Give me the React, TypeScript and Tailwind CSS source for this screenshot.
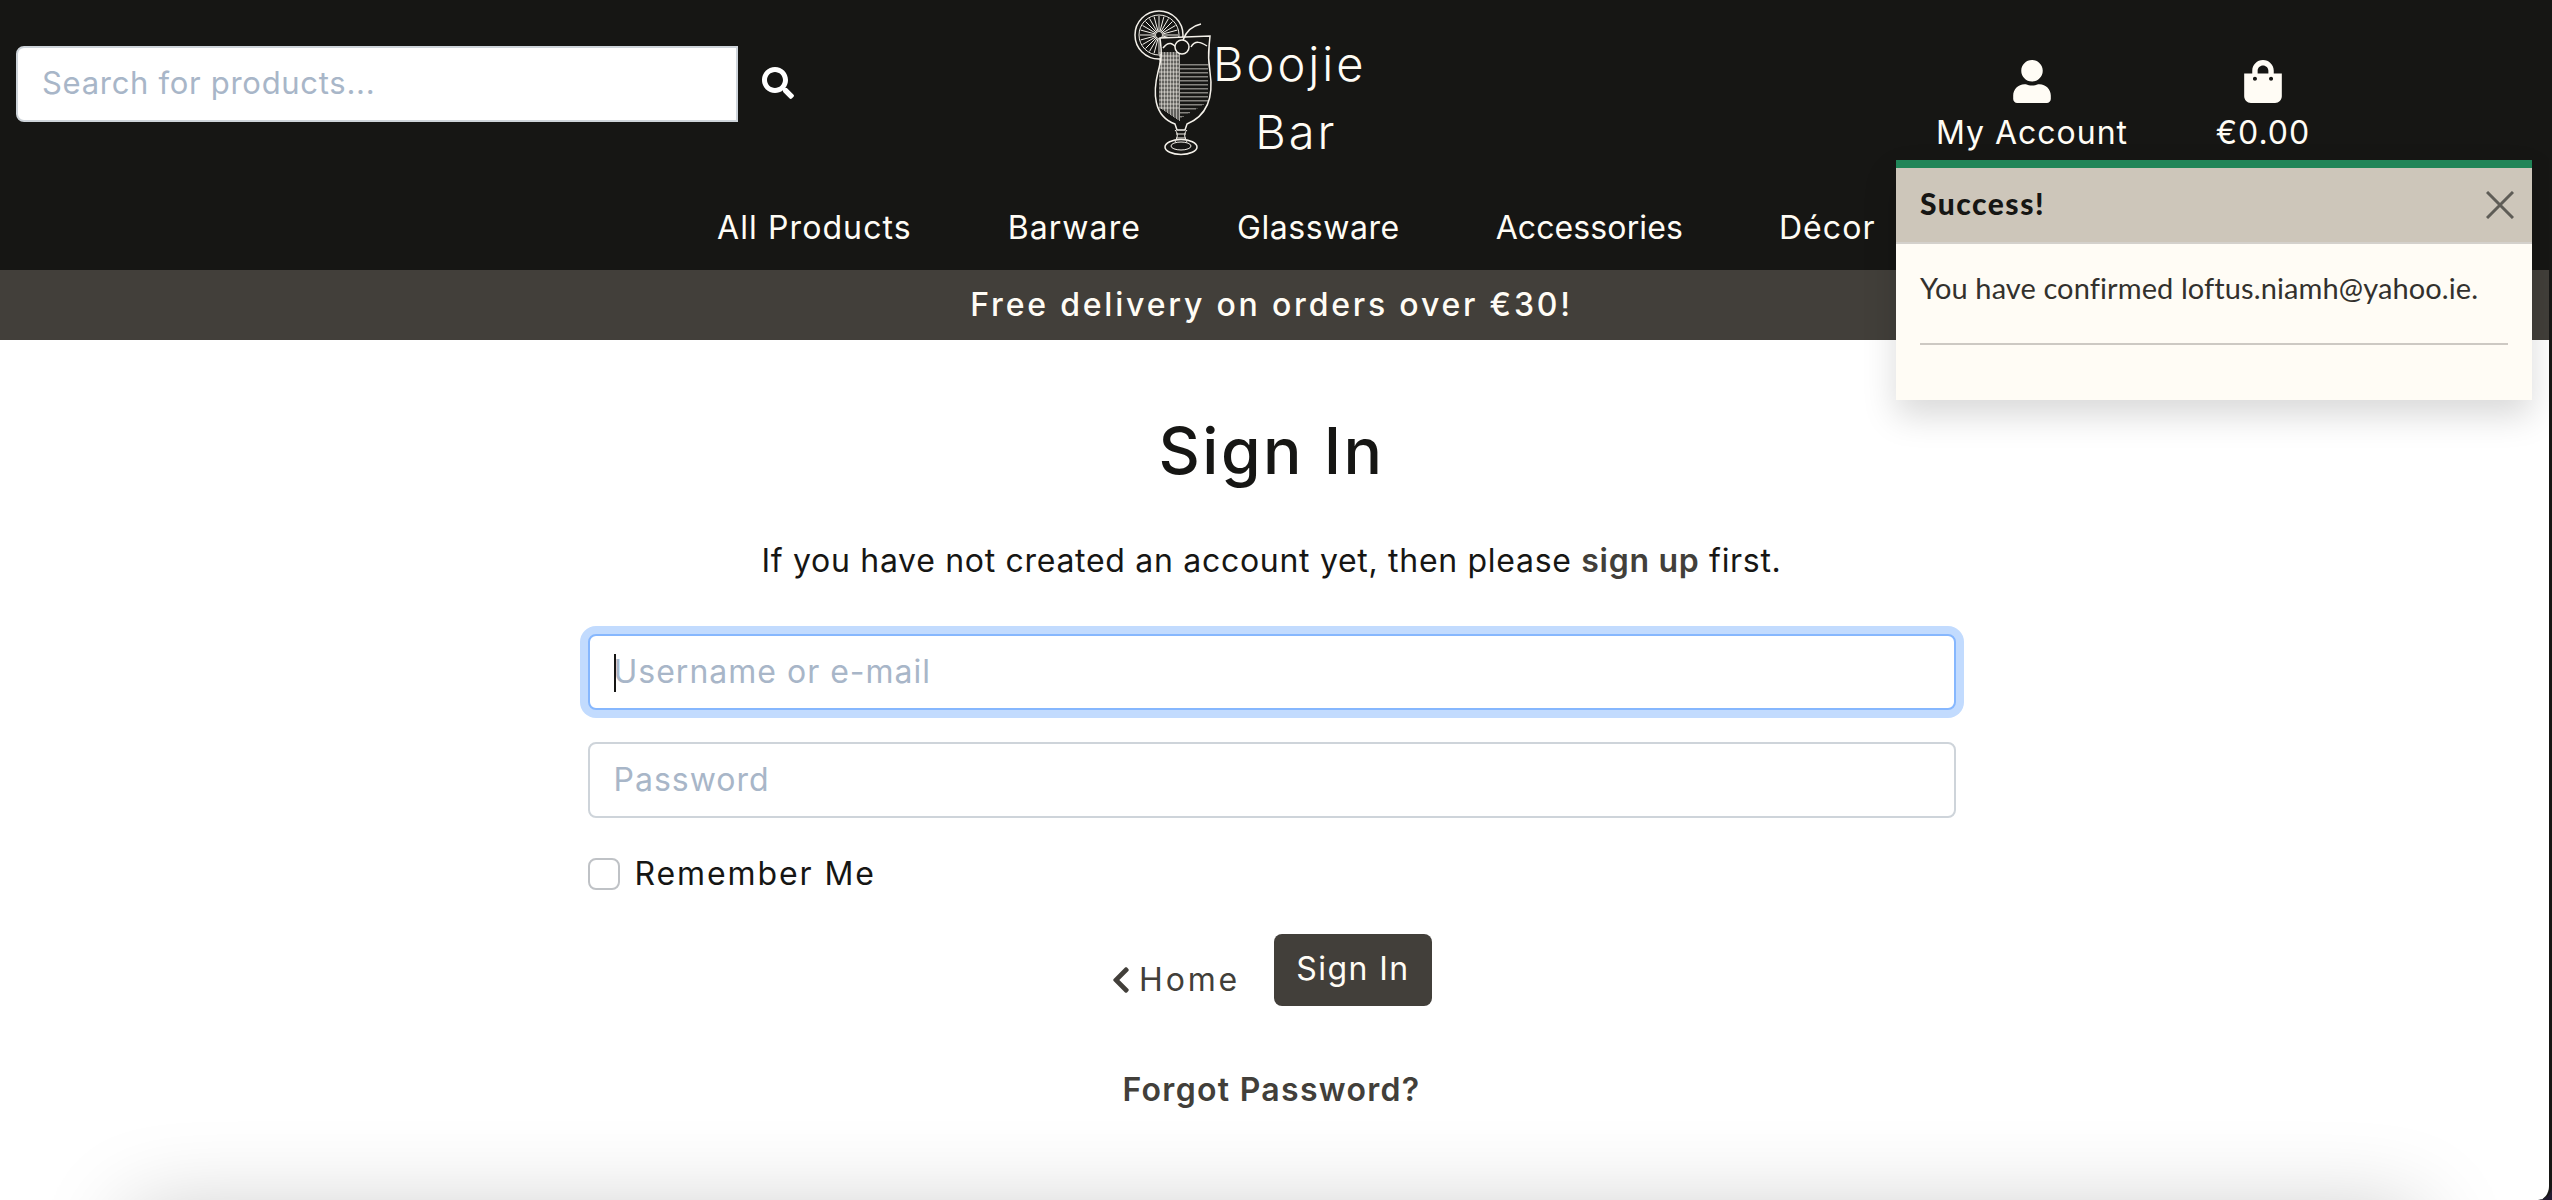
import { FaChevronLeft, FaSearch, FaShoppingBag, FaUser } from "react-icons/fa";

const navLinks = [
  { label: "All Products", spacing: "tracking-[1.1px]" },
  { label: "Barware", spacing: "tracking-[1.1px]" },
  { label: "Glassware", spacing: "tracking-[0.55px]" },
  { label: "Accessories", spacing: "tracking-[0.1px]" },
  { label: "Décor", spacing: "tracking-[1.1px]" },
];

function LogoGlass() {
  const spokes = Array.from({ length: 24 }, (_, i) => (i * Math.PI) / 12);
  const hatch = Array.from({ length: 14 }, (_, i) => i);

  return (
    <svg width="84" height="156" viewBox="0 0 84 156" fill="none" stroke="#f4f1ea" strokeWidth="1" className="shrink-0">
      {/* orange slice */}
      <circle cx="26" cy="35" r="24" strokeWidth="1.5" />
      <circle cx="26" cy="35" r="20" />
      {spokes.map((a) => (
        <line
          key={a}
          x1={26 + 3 * Math.cos(a)}
          y1={35 + 3 * Math.sin(a)}
          x2={26 + 19 * Math.cos(a)}
          y2={35 + 19 * Math.sin(a)}
        />
      ))}
      {/* glass */}
      <path
        d="M27 38 L77 36 C76 50 74 54 77 72 C80 92 78 114 54 124 L52 130 L44 130 L42 124 C20 116 20 92 25 72 C30 54 28 48 27 38 Z"
        fill="#161614"
        strokeWidth="1.5"
      />
      {hatch.map((i) => (
        <line key={`h${i}`} x1="26" y1={56 + i * 4} x2="46" y2={56 + i * 4} strokeWidth="0.7" />
      ))}
      {hatch.map((i) => (
        <line key={`v${i}`} x1={27 + i * 1.5} y1="52" x2={27 + i * 1.5} y2={108 + i} strokeWidth="0.7" />
      ))}
      {hatch.map((i) => (
        <line key={`d${i}`} x1={48 + i * 2} y1="64" x2={48 + i * 2} y2={118 - i * 1.2} strokeWidth="1" strokeDasharray="1.5 2.5" />
      ))}
      <path d="M30 48 C36 40 40 44 44 48 M58 47 C62 40 68 42 74 46" strokeWidth="1.5" />
      {/* cherry */}
      <circle cx="49" cy="47" r="7" fill="#161614" strokeWidth="1.5" />
      <path d="M50 40 C53 32 58 26 68 24" strokeWidth="1.5" />
      {/* stem and foot */}
      <path d="M42 130 C46 134 44 138 42 142 M54 130 C50 134 52 138 54 142 M43 134 H53 M43 138 H53" />
      <ellipse cx="48" cy="147" rx="16" ry="7.5" strokeWidth="1.5" />
      <ellipse cx="48" cy="146" rx="10" ry="4" />
    </svg>
  );
}

export default function App() {
  return (
    <div className="h-[1200px] bg-[#221b30] font-[Inter,sans-serif]">
      <div className="relative h-[1200px] overflow-hidden rounded-br-[14px] border-r-[3px] border-[#161614] bg-white text-[#161614]">
        <header className="h-[270px] bg-[#161614] text-[#fffcf5]">
          <div className="flex h-[188px] items-start">
            <form className="mt-[46px] ml-4 flex items-center">
              <input
                placeholder="Search for products..."
                className="h-[76px] w-[722px] rounded-l-lg border-2 border-[#ced4da] bg-white px-6 pb-[3px] text-[31px] tracking-[0.7px] text-[#161614] placeholder:text-[#a8b6c8]"
              />
              <FaSearch className="mb-[3px] ml-6 size-8 text-white" />
            </form>

            <div className="ml-[339px] flex">
              <LogoGlass />
              <div className="-ml-[4px] flex flex-col items-center text-[47px] font-light tracking-[3px] leading-[68px]">
                <span className="-mt-0 pt-[30px]">Boojie</span>
                <span className="ml-[13px]">Bar</span>
              </div>
            </div>

            <div className="mt-[60px] ml-[571px] flex items-start gap-[90px] text-[32px] tracking-[1px] leading-[60px]">
              <a className="flex w-[189px] flex-col items-center">
                <FaUser className="h-[43px] w-[38px]" />
                <span className="whitespace-nowrap">My Account</span>
              </a>
              <a className="flex w-[93px] flex-col items-center">
                <FaShoppingBag className="h-[43px] w-[38px]" />
                <span>€0.00</span>
              </a>
            </div>
          </div>

          <nav className="mt-[20px] flex gap-[96px] pl-[717px] text-[32px] leading-[40px]">
            {navLinks.map((link) => (
              <a key={link.label} className={`whitespace-nowrap ${link.spacing}`}>
                {link.label}
              </a>
            ))}
          </nav>
        </header>

        <div className="flex h-[70px] items-center justify-center bg-[#423f3a] pr-[6px] text-[32px] font-medium tracking-[2.8px] text-[#fffcf5]">
          Free delivery on orders over €30!
        </div>

        <main className="flex flex-col items-center pr-[6px]">
          <h1 className="mt-[70px] text-[64px] font-medium tracking-[2.5px] leading-[82px]">Sign In</h1>
          <p className="mt-[45px] text-[32px] tracking-[0.7px] leading-[48px]">
            If you have not created an account yet, then please{" "}
            <a className="font-semibold text-[#423f3a]">sign up</a> first.
          </p>

          <form className="mt-[49px] flex w-[1368px] flex-col">
            <div className="relative">
              <input
                placeholder="Username or e-mail"
                className="h-[76px] w-full rounded-lg border-2 border-[#86b7fe] bg-white px-6 pb-[2px] text-[32px] tracking-[1px] shadow-[0_0_0_8px_#c2dbfe] outline-none placeholder:text-[#a8b6c8]"
              />
              <span className="absolute top-[20px] left-[26px] h-[38px] w-[2px] bg-[#161614]" />
            </div>
            <input
              placeholder="Password"
              className="mt-8 h-[76px] w-full rounded-lg border-2 border-[#ced4da] bg-white px-6 pb-[2px] text-[32px] tracking-[1px] placeholder:text-[#a8b6c8]"
            />
            <label className="mt-[40px] flex items-center text-[32px] tracking-[1.9px] leading-[32px]">
              <input
                type="checkbox"
                className="size-8 appearance-none rounded-lg border-2 border-[#bfc2c6] bg-white"
              />
              <span className="ml-[15px]">Remember Me</span>
            </label>

            <div className="mt-[44px] flex items-center justify-center">
              <a className="mt-[20px] flex items-center text-[32px] tracking-[2.8px] text-[#423f3a]">
                <FaChevronLeft className="h-[30px] w-[20px]" />
                <span className="ml-[8px]">Home</span>
              </a>
              <button
                type="button"
                className="ml-[34px] h-[72px] w-[158px] rounded-lg bg-[#423f3a] pb-[3px] text-[32px] tracking-[1.4px] text-[#fffcf5]"
              >
                Sign In
              </button>
            </div>

            <a className="mt-[64px] text-center text-[32px] font-semibold tracking-[1.3px] leading-[40px] text-[#423f3a]">
              Forgot Password?
            </a>
          </form>
        </main>

        <footer className="mx-[160px] mt-[132px] h-[100px] bg-white shadow-[0_0_90px_30px_rgba(0,0,0,0.22)]" />

        {/* toast */}
        <div className="absolute top-[160px] left-[1896px] w-[636px] border-t-8 border-[#208558] bg-[#fffcf5] font-[Lato,sans-serif] shadow-[0_16px_32px_rgba(0,0,0,0.15)]">
          <div className="flex h-[76px] items-center justify-between border-b-2 border-[#d4d1cc] bg-[#cdc6ba] pr-[18px] pl-6">
            <strong className="pb-[3px] text-[30px] font-black tracking-[1.5px] text-[#161614]">Success!</strong>
            <svg width="28" height="28" viewBox="0 0 28 28" stroke="#5e5c56" strokeWidth="3" className="shrink-0">
              <path d="M1 1 27 27 M27 1 1 27" />
            </svg>
          </div>
          <div className="h-[156px] px-6 pt-[24px] text-[#33312d]">
            <p className="text-[29px] tracking-[0.1px] leading-[40px]">You have confirmed loftus.niamh@yahoo.ie.</p>
            <div className="mt-[35px] h-[2px] bg-[#cdc9c3]" />
          </div>
        </div>
      </div>
    </div>
  );
}
